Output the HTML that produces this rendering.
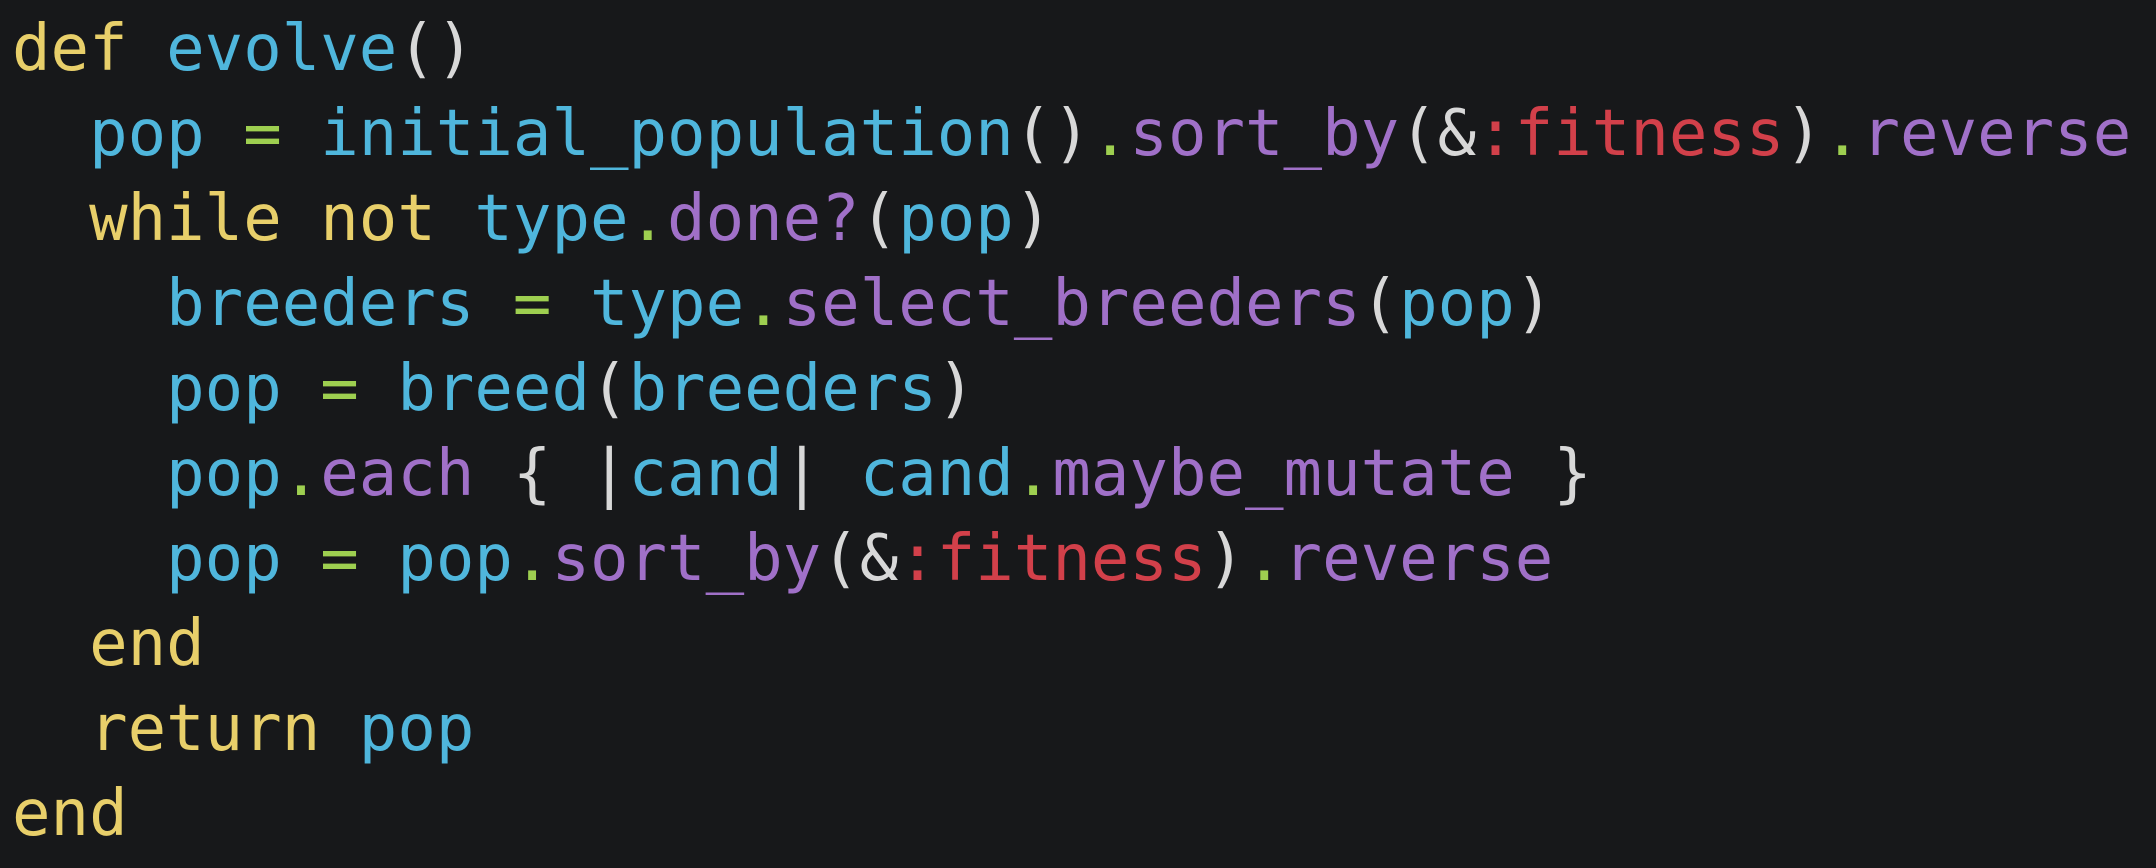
<!DOCTYPE html>
<html><head><meta charset="utf-8"><style>
html,body{margin:0;padding:0;background:#17181a;width:2156px;height:868px;overflow:hidden}
pre{margin:0;padding:7px 0 0 12px;font-family:"DejaVu Sans Mono","Liberation Mono",monospace;font-size:64px;line-height:85px;color:#d8d8d8}
.k{color:#e8cf6a}.b{color:#4fb6dc}.p{color:#a070c8}.r{color:#d2404a}.g{color:#9ecf50}.w{color:#d8d8d8}
</style></head><body><pre><span class="k">def</span> <span class="b">evolve</span>()
  <span class="b">pop</span> <span class="g">=</span> <span class="b">initial_population</span>()<span class="g">.</span><span class="p">sort_by</span>(&amp;<span class="r">:fitness</span>)<span class="g">.</span><span class="p">reverse</span>
  <span class="k">while not</span> <span class="b">type</span><span class="g">.</span><span class="p">done?</span>(<span class="b">pop</span>)
    <span class="b">breeders</span> <span class="g">=</span> <span class="b">type</span><span class="g">.</span><span class="p">select_breeders</span>(<span class="b">pop</span>)
    <span class="b">pop</span> <span class="g">=</span> <span class="b">breed</span>(<span class="b">breeders</span>)
    <span class="b">pop</span><span class="g">.</span><span class="p">each</span> { |<span class="b">cand</span>| <span class="b">cand</span><span class="g">.</span><span class="p">maybe_mutate</span> }
    <span class="b">pop</span> <span class="g">=</span> <span class="b">pop</span><span class="g">.</span><span class="p">sort_by</span>(&amp;<span class="r">:fitness</span>)<span class="g">.</span><span class="p">reverse</span>
  <span class="k">end</span>
  <span class="k">return</span> <span class="b">pop</span>
<span class="k">end</span></pre></body></html>
